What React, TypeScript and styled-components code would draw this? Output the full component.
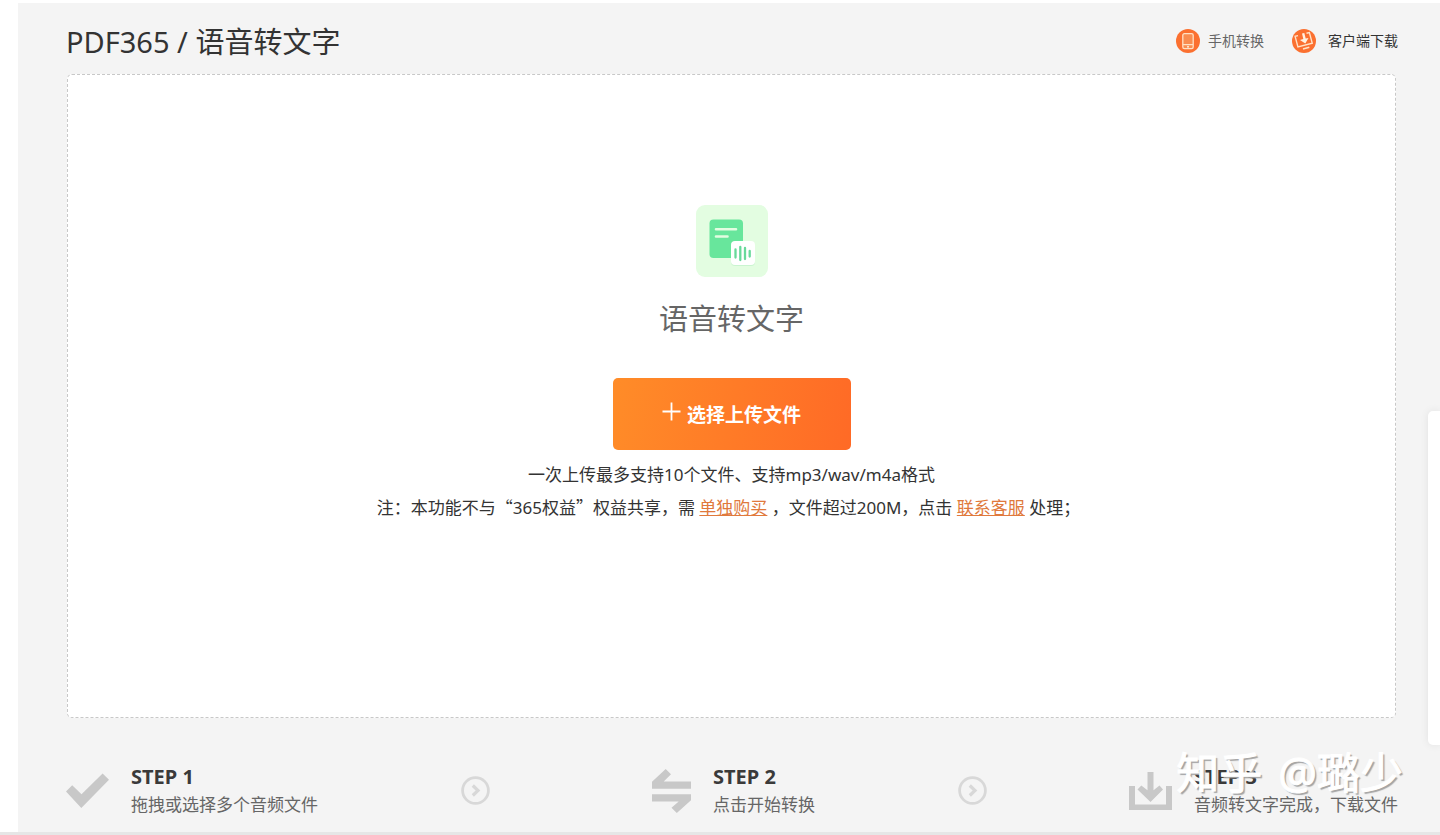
import React from "react";
import styled, { createGlobalStyle } from "styled-components";

const GlobalStyle = createGlobalStyle`
  * { box-sizing: border-box; }
  body {
    margin: 0;
    background: #fff;
    color: #333;
    font-family: "Noto Sans", "Noto Sans CJK SC", sans-serif;
  }
  h1, h2, h3, p { margin: 0; }
`;

const Page = styled.div`
  position: relative;
  display: flex;
  min-height: 100vh;
  padding: 3px 0 0 18px;
  border-bottom: 3px solid #e6e6e6;
  overflow: hidden;
`;

const Main = styled.main`
  flex: 1;
  display: flex;
  flex-direction: column;
  padding: 0 42px 0 48px;
  background: #f4f4f4;
`;

const Header = styled.header`
  display: flex;
  align-items: center;
  justify-content: space-between;
  height: 71px;
`;

const Title = styled.h1`
  font-size: 29px;
  line-height: 40px;
  font-weight: 400;
  color: #333;
  padding-top: 6px;
`;

const HeaderLinks = styled.nav`
  display: flex;
  gap: 28px;
  padding-top: 4px;
`;

const HeaderLink = styled.a<{ $tone: string; $gap: number }>`
  display: flex;
  align-items: center;
  gap: ${(p) => p.$gap}px;
  font-size: 14px;
  line-height: 24px;
  color: ${(p) => p.$tone};
  text-decoration: none;
`;

const UploadCard = styled.section`
  flex: 1;
  display: flex;
  flex-direction: column;
  align-items: center;
  margin: 0 2px 0 1px;
  padding: 130px 20px 40px;
  background: #fff;
  border: 1px dashed #c8c8c8;
  border-radius: 5px;
`;

const CardTitle = styled.h2`
  margin-top: 20px;
  font-size: 29px;
  line-height: 44px;
  font-weight: 400;
  color: #666;
`;

const UploadButton = styled.button`
  display: flex;
  align-items: center;
  justify-content: center;
  gap: 6px;
  width: 238px;
  height: 72px;
  margin: 37px 0 8px;
  border: 0;
  border-radius: 5px;
  background: linear-gradient(100deg, #ff8c28, #ff6a26);
  color: #fff;
  font-family: inherit;
  font-size: 19px;
  font-weight: 700;
  cursor: pointer;
`;

const Hint = styled.p`
  font-size: 17px;
  line-height: 33px;
  text-align: center;
`;

const Note = styled(Hint)`
  padding-right: 6px;
`;

const WideQuote = styled.span`
  font-family: "Noto Sans CJK SC", sans-serif;
  line-height: 1;
`;

const HintLink = styled.a`
  color: #e0793c;
  text-decoration: underline;
`;

const Steps = styled.ol`
  display: flex;
  align-items: center;
  justify-content: space-between;
  height: 114px;
  margin: 0;
  padding: 31px 0 0;
  list-style: none;
`;

const StepItem = styled.li<{ $indent?: boolean }>`
  display: flex;
  align-items: center;
  gap: 22px;
  padding-left: ${(p) => (p.$indent ? 20 : 0)}px;
`;

const StepDivider = styled.li`
  display: flex;
`;

const StepName = styled.h3`
  font-size: 20px;
  line-height: 28px;
  font-weight: 700;
  color: #3a3a3a;
`;

const StepText = styled.p`
  font-size: 17px;
  line-height: 28px;
  color: #666;
`;

const SidePanel = styled.aside`
  position: absolute;
  top: 411px;
  right: 0;
  width: 12px;
  height: 334px;
  background: #fff;
  border-radius: 5px 0 0 5px;
  box-shadow: 0 0 8px rgba(0, 0, 0, 0.08);
`;

const Watermark = styled.div`
  position: absolute;
  right: 37px;
  bottom: 29px;
  display: flex;
  gap: 16px;
  font-size: 43px;
  line-height: 60px;
  color: #fff;
  -webkit-text-stroke: 1px #fff;
  text-shadow: 2px 2px 1px #a4a4a4;
  pointer-events: none;
`;

const PhoneIcon = () => (
  <svg width="24" height="24" viewBox="0 0 24 24" fill="none" aria-hidden="true">
    <circle cx="12" cy="12" r="12" fill="#fb7030" />
    <rect x="6.8" y="4.7" width="10.4" height="15" rx="1.6" fill="#f98c50" stroke="#ffe0c4" strokeWidth="1.3" />
    <path d="M7 15.6h10" stroke="#ffe0c4" strokeWidth="1.2" />
    <circle cx="12" cy="17.7" r="1" fill="#ffe9d6" />
  </svg>
);

const ClientIcon = () => (
  <svg width="24" height="24" viewBox="0 0 24 24" fill="none" aria-hidden="true">
    <circle cx="12" cy="12" r="12" fill="#fb7030" />
    <g transform="rotate(-15 12 12)" stroke="#ffe3c8">
      <path d="M7.6 5.2H4.6v11h14.8v-11h-3" strokeWidth="1.4" />
      <path d="M9 19.4h6.5" strokeWidth="1.6" />
    </g>
    <path d="M10 4.6l2.3-.6 1.4 5.6 2.8-.7-3.2 5.6-5.3-3.6 3.3-.8z" fill="#fff1e0" />
  </svg>
);

const AudioDocIcon = () => (
  <svg width="72" height="72" viewBox="0 0 72 72" fill="none" aria-hidden="true">
    <rect width="72" height="72" rx="9" fill="#e3fde1" />
    <rect x="13.5" y="14.5" width="33.5" height="38.5" rx="4" fill="#68e69c" />
    <path d="M20 24.3h20M20 31.5h11.5" stroke="#e3fde1" strokeWidth="2.6" strokeLinecap="round" />
    <rect x="35" y="37" width="24" height="24" rx="4" fill="#b9efc4" opacity="0.6" />
    <rect x="35" y="36" width="24" height="24" rx="4" fill="#fff" />
    <path d="M39.5 44.5v8M44.3 42v13M49 43v11M53.7 46v5.5" stroke="#68d99a" strokeWidth="2.3" strokeLinecap="round" />
  </svg>
);

const PlusIcon = () => (
  <svg width="19" height="24" viewBox="0 0 19 24" aria-hidden="true">
    <path d="M0.5 9.5h18M9.5 0.5v18" stroke="#fff" strokeWidth="1.8" />
  </svg>
);

const CheckIcon = () => (
  <svg width="43" height="44" viewBox="0 0 43 44" aria-hidden="true">
    <path d="M0 22.5l6.2-6.3 9.3 9L36.6 4.5l6.4 6.3L15.3 39z" fill="#c8c8c8" />
  </svg>
);

const SwapIcon = () => (
  <svg width="39" height="44" viewBox="0 0 39 44" fill="#c8c8c8" aria-hidden="true">
    <path d="M0 12.7L13.7 0l5.3 5.3-7.3 7.2H39v7.3H0z" />
    <path d="M39 31.3L24.8 44l-5.3-5.2 7.2-6.3H0v-7.3h39z" />
  </svg>
);

const DownloadIcon = () => (
  <svg width="43" height="40" viewBox="0 0 43 40" fill="#c8c8c8" aria-hidden="true">
    <path d="M0 15h6v18.5h31V15h6v24H0z" />
    <path d="M18.5 1h6v18.2l6-4.7 3.5 4L21.5 31 8.5 18.5l3.8-4 6.2 4.7z" />
  </svg>
);

const NextIcon = () => (
  <svg width="29" height="29" viewBox="0 0 29 29" fill="none" stroke="#d8d8d8" aria-hidden="true">
    <circle cx="14.5" cy="14.5" r="12.9" strokeWidth="2.8" />
    <path d="M11.8 9.5l5.2 5-5.2 5" strokeWidth="3.2" />
  </svg>
);

type StepProps = {
  icon: React.ReactNode;
  name: string;
  text: string;
  indent?: boolean;
};

const Step = ({ icon, name, text, indent }: StepProps) => (
  <StepItem $indent={indent}>
    {icon}
    <div>
      <StepName>{name}</StepName>
      <StepText>{text}</StepText>
    </div>
  </StepItem>
);

export default function App() {
  return (
    <>
      <GlobalStyle />
      <Page>
        <Main>
          <Header>
            <Title>PDF365 / 语音转文字</Title>
            <HeaderLinks>
              <HeaderLink href="#mobile" $tone="#666" $gap={8}>
                <PhoneIcon />
                手机转换
              </HeaderLink>
              <HeaderLink href="#client" $tone="#333" $gap={12}>
                <ClientIcon />
                客户端下载
              </HeaderLink>
            </HeaderLinks>
          </Header>

          <UploadCard>
            <AudioDocIcon />
            <CardTitle>语音转文字</CardTitle>
            <UploadButton type="button">
              <PlusIcon />
              选择上传文件
            </UploadButton>
            <Hint>一次上传最多支持10个文件、支持mp3/wav/m4a格式</Hint>
            <Note>
              注：本功能不与<WideQuote>“</WideQuote>365权益<WideQuote>”</WideQuote>权益共享，需{" "}
              <HintLink href="#buy">单独购买</HintLink> ，文件超过200M，点击{" "}
              <HintLink href="#support">联系客服</HintLink> 处理；
            </Note>
          </UploadCard>

          <Steps>
            <Step icon={<CheckIcon />} name="STEP 1" text="拖拽或选择多个音频文件" />
            <StepDivider><NextIcon /></StepDivider>
            <Step icon={<SwapIcon />} name="STEP 2" text="点击开始转换" indent />
            <StepDivider><NextIcon /></StepDivider>
            <Step icon={<DownloadIcon />} name="STEP 3" text="音频转文字完成，下载文件" />
          </Steps>
        </Main>
        <SidePanel />
        <Watermark>
          <span>知乎</span>
          <span>@璐少</span>
        </Watermark>
      </Page>
    </>
  );
}
